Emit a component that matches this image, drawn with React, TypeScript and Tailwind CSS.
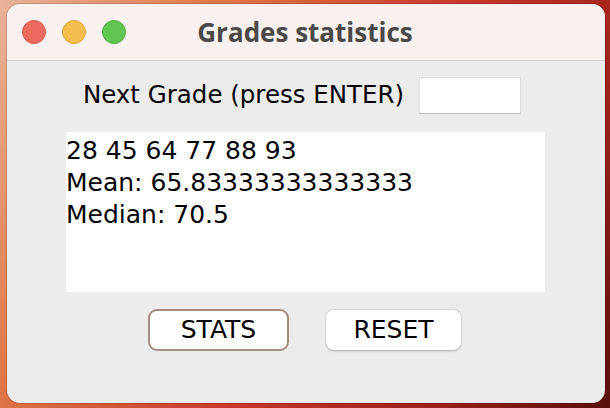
import React, { useState } from 'react';

const grades = [28, 45, 64, 77, 88, 93];

const mean = (xs: number[]) => xs.reduce((a, b) => a + b, 0) / xs.length;
const median = (xs: number[]) => {
  const s = [...xs].sort((a, b) => a - b);
  const m = Math.floor(s.length / 2);
  return s.length % 2 ? s[m] : (s[m - 1] + s[m]) / 2;
};

const App: React.FC = () => {
  const [grade, setGrade] = useState('');

  return (
    <div className="w-[610px] h-[408px] overflow-hidden bg-[linear-gradient(120deg,#e9b39a_0%,#e07a4a_25%,#c8382a_55%,#9a1f1a_80%,#5a0f0c_100%)] pl-[7px] pr-[5px] pt-[4px] pb-[5px]">
      <div className="h-full rounded-[13px] overflow-hidden bg-[#ececec] flex flex-col shadow-[0_0_0_1px_rgba(0,0,0,0.15)]">
        {/* title bar */}
        <div className="h-[57px] shrink-0 bg-[#f9f1ef] border-b border-[#d4d0ce] flex items-center relative">
          <div className="flex gap-[16px] pl-[15px]">
            <span className="w-[24px] h-[24px] rounded-full bg-[#ec6a5e] border border-[#d5554a]" />
            <span className="w-[24px] h-[24px] rounded-full bg-[#f5bf4f] border border-[#d9a33a]" />
            <span className="w-[24px] h-[24px] rounded-full bg-[#61c554] border border-[#4ea940]" />
          </div>
          <div className="absolute inset-0 flex items-center justify-center pr-[2px] text-[26px] font-bold text-[#4b4848] font-['Open_Sans',sans-serif]">
            Grades statistics
          </div>
        </div>

        {/* content */}
        <div className="flex flex-col items-center font-['DejaVu_Sans',sans-serif] text-black">
          <div className="flex items-center gap-[15px] mt-[16px] h-[37px] pr-[8px]">
            <span className="text-[24.5px]">Next Grade (press ENTER)</span>
            <input
              value={grade}
              onChange={e => setGrade(e.target.value)}
              className="w-[102px] h-[37px] bg-white border border-[#dcdcdc] border-b-[#bcbcbc] outline-none px-1 text-[18px]"
            />
          </div>

          <div className="mt-[18px] w-[479px] h-[160px] bg-white pl-[0px] pt-[3px] text-[25px] leading-[32px] self-start ml-[59px]">
            <div>{grades.join(' ')}</div>
            <div>Mean: {mean(grades)}</div>
            <div>Median: {median(grades)}</div>
          </div>

          <div className="flex gap-[37px] mt-[17px] pr-[3px]">
            <button className="w-[141px] h-[42px] rounded-[9px] bg-white border-2 border-[#a58d7e] text-[25px]">
              STATS
            </button>
            <button className="w-[135px] h-[40px] mt-[1px] rounded-[8px] bg-white shadow-[0_0.5px_2px_rgba(0,0,0,0.3)] text-[25px]">
              RESET
            </button>
          </div>
        </div>
      </div>
    </div>
  );
};

export default App;
